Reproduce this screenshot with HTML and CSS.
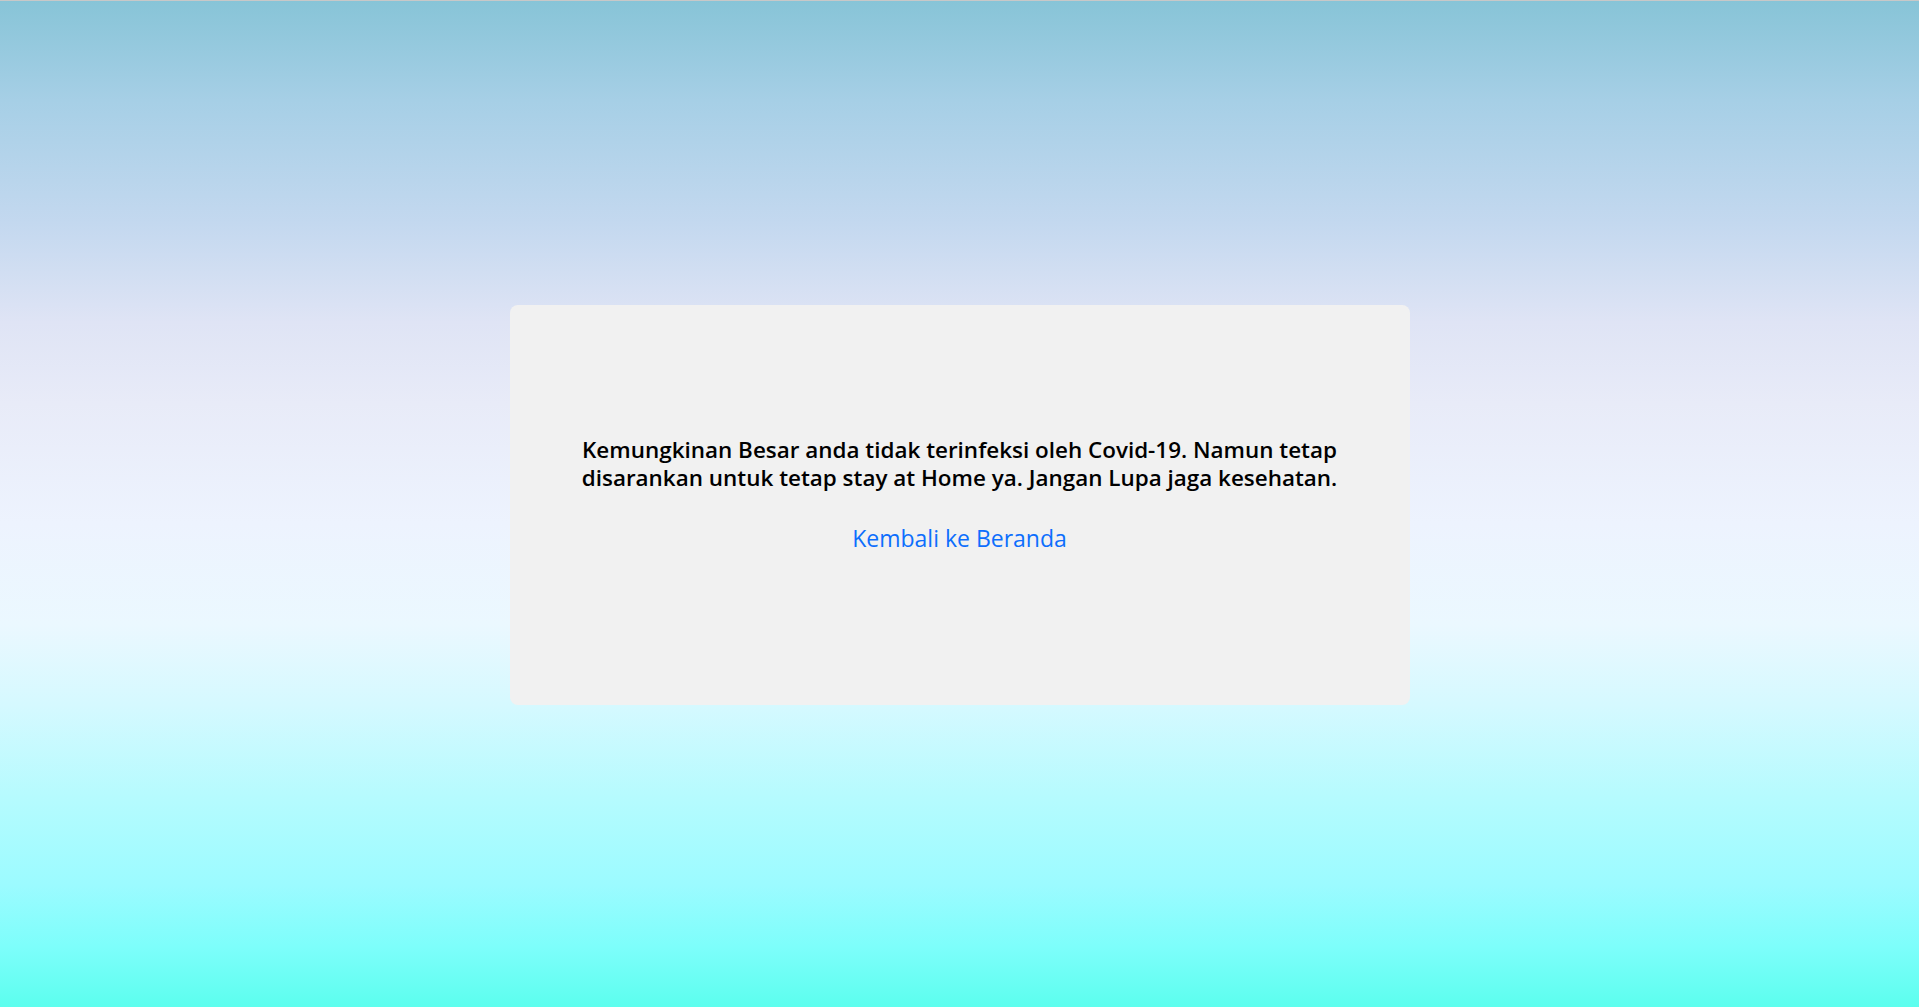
FILE: index.html
```html
<!DOCTYPE html>
<html lang="id">
<head>
<meta charset="utf-8">
<title>Hasil</title>
<link rel="stylesheet" href="styles.css">
</head>
<body>
<main class="page">
  <section class="card">
    <p class="message">Kemungkinan Besar anda tidak terinfeksi oleh Covid-19. Namun tetap disarankan untuk tetap stay at Home ya. Jangan Lupa jaga kesehatan.</p>
    <a class="home-link" href="#">Kembali ke Beranda</a>
  </section>
</main>
</body>
</html>
```
FILE: styles.css
```css
html, body {
  margin: 0;
  padding: 0;
  height: 100%;
}
body {
  font-family: "Open Sans", "Noto Sans", sans-serif;
  background: linear-gradient(180deg,
    #87c4d7 0%,
    #a6cfe6 10%,
    #c3d8ef 22%,
    #dfe4f5 32%,
    #e8ebf8 40%,
    #edf3fe 52%,
    #ebf8ff 62%,
    #d5f9ff 70%,
    #b6fbfe 79%,
    #9bfbff 88%,
    #7dfefb 94%,
    #5cfeee 100%);
}
.page {
  min-height: 100vh;
  display: flex;
  align-items: center;
  justify-content: center;
  box-sizing: border-box;
  border-top: 1px solid #c8c8c8;
  padding-top: 2px;
}
.card {
  width: 900px;
  height: 400px;
  box-sizing: border-box;
  background: #f1f1f1;
  border-radius: 8px;
  display: flex;
  flex-direction: column;
  align-items: center;
  justify-content: center;
  padding: 0 50px 22px;
  text-align: center;
}
.message {
  margin: 0 0 32px;
  font-size: 22.45px;
  font-weight: 600;
  line-height: 28px;
  color: #000;
}
.home-link {
  font-size: 23px;
  line-height: 28px;
  color: #0d6efd;
  text-decoration: none;
}
```
